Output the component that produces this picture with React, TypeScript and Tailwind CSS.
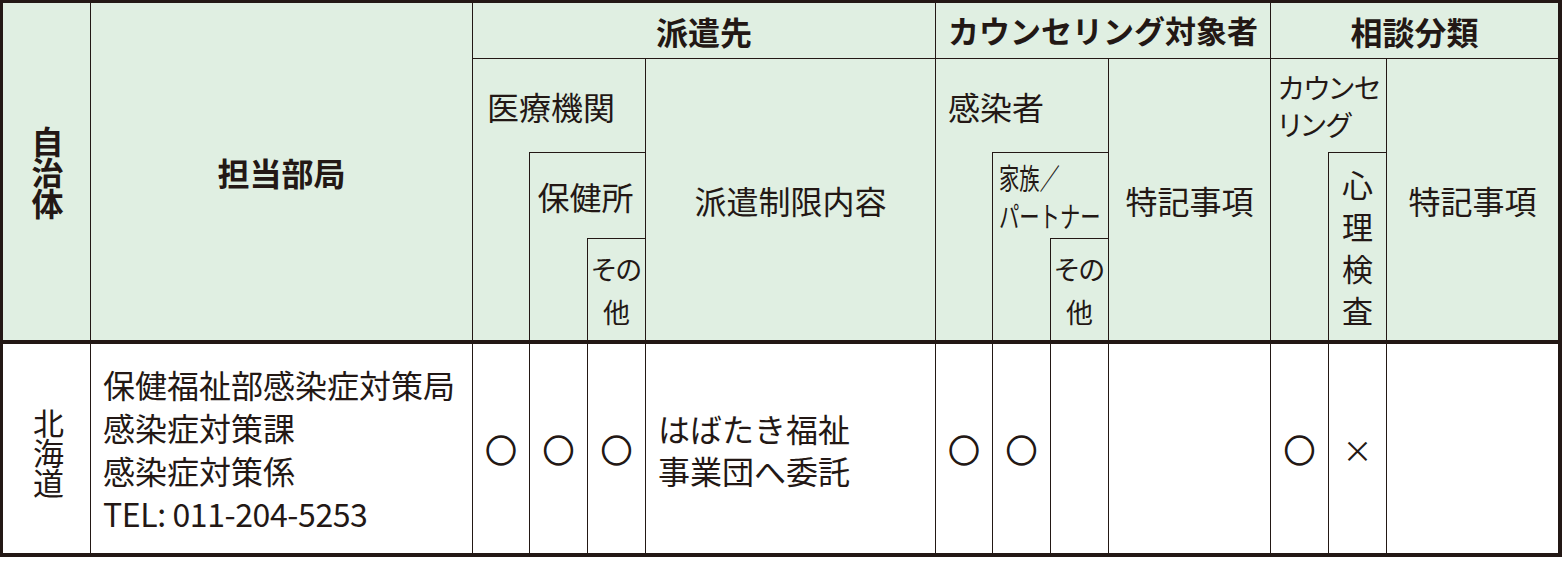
const cols =
  'grid-cols-[88px_382px_57px_58px_58px_290px_57px_58px_58px_162px_58px_58px_171px]';

const Mark = ({ mark, bold }: { mark?: string; bold?: boolean }) => (
  <div
    className={
      bold
        ? 'flex items-center justify-center border-r text-[31px] leading-none [-webkit-text-stroke:1.3px_#231815]'
        : 'flex items-center justify-center border-r text-[30px] leading-none'
    }
  >
    {mark}
  </div>
);

const App = () => {
  return (
    <div className="bg-white h-[561px] w-[1563px] text-[#231815] font-['Noto_Sans_CJK_JP','Noto_Sans',sans-serif]">
      <div className="w-[1562px] border-l-[3px] border-t-[3px] border-r-[4px] border-b-[4px]">
        {/* 見出し */}
        <div
          className={`grid ${cols} grid-rows-[56px_93px_86px_102px] border-b-[4px] bg-[#e0efe2]`}
        >
          <div className="col-start-1 row-start-1 row-span-4 flex items-center justify-center border-r pl-[2px]">
            <div className="w-[1em] text-center text-[32px] font-bold leading-[31px]">自治体</div>
          </div>
          <div className="col-start-2 row-start-1 row-span-4 flex items-center justify-center border-r text-[32px] font-bold">
            担当部局
          </div>

          <div className="col-start-3 col-span-4 row-start-1 flex items-center justify-center border-r border-b text-[32px] font-bold">
            派遣先
          </div>
          <div className="col-start-7 col-span-4 row-start-1 flex items-center justify-center border-r border-b text-[31px] font-bold">
            カウンセリング対象者
          </div>
          <div className="col-start-11 col-span-3 row-start-1 flex items-center justify-center border-b text-[32px] font-bold">
            相談分類
          </div>

          {/* 派遣先 */}
          <div className="col-start-3 col-span-3 row-start-2 flex items-center border-r pl-[14px] text-[32px]">
            医療機関
          </div>
          <div className="col-start-6 row-start-2 row-span-3 flex items-center justify-center border-r text-[32px]">
            派遣制限内容
          </div>
          <div className="col-start-3 row-start-3 row-span-2 border-r" />
          <div className="col-start-4 col-span-2 row-start-3 flex items-center justify-center border-t border-r pr-[4px] text-[32px]">
            保健所
          </div>
          <div className="col-start-4 row-start-4 border-r" />
          <div className="col-start-5 row-start-4 flex items-center justify-center border-t border-r text-center text-[27px] leading-[43px] [font-feature-settings:'palt']">
            <div>
              その
              <br />他
            </div>
          </div>

          {/* カウンセリング対象者 */}
          <div className="col-start-7 col-span-3 row-start-2 flex items-center border-r pl-[12px] text-[32px]">
            感染者
          </div>
          <div className="col-start-7 row-start-3 row-span-2 border-r" />
          <div className="col-start-8 col-span-2 row-start-3 flex items-center border-t border-r pl-[6px] text-[29px] leading-[38px]">
            <div className="origin-left scale-x-[0.7] whitespace-nowrap">
              家族／
              <br />
              パートナー
            </div>
          </div>
          <div className="col-start-8 row-start-4 border-r" />
          <div className="col-start-9 row-start-4 flex items-center justify-center border-t border-r text-center text-[27px] leading-[43px] [font-feature-settings:'palt']">
            <div>
              その
              <br />他
            </div>
          </div>
          <div className="col-start-10 row-start-2 row-span-3 flex items-center justify-center border-r text-[32px]">
            特記事項
          </div>

          {/* 相談分類 */}
          <div className="col-start-11 col-span-2 row-start-2 flex items-center border-r pl-[7px] text-[28px] leading-[37px] [font-feature-settings:'palt']">
            <div className="whitespace-nowrap">
              カウンセ
              <br />
              リング
            </div>
          </div>
          <div className="col-start-11 row-start-3 row-span-2 border-r" />
          <div className="col-start-12 row-start-3 row-span-2 flex items-center justify-center border-t border-r">
            <div className="w-[1em] text-center text-[31px] leading-[42px]">心理検査</div>
          </div>
          <div className="col-start-13 row-start-2 row-span-3 flex items-center justify-center text-[32px]">
            特記事項
          </div>
        </div>

        {/* 北海道の行 */}
        <div className={`grid ${cols} h-[209px] bg-white`}>
          <div className="flex items-center justify-center border-r pl-[4px] pt-[6px]">
            <div className="w-[1em] text-center text-[31px] leading-[30px]">北海道</div>
          </div>
          <div className="flex items-center border-r pl-[12px] text-[32px] leading-[43px]">
            <div>
              保健福祉部感染症対策局
              <br />
              感染症対策課
              <br />
              感染症対策係
              <br />
              <span className="tracking-[-0.4px]">TEL: 011-204-5253</span>
            </div>
          </div>
          <Mark mark="○" bold />
          <Mark mark="○" bold />
          <Mark mark="○" bold />
          <div className="flex items-center border-r pl-[12px] text-[32px] leading-[42px]">
            <div>
              はばたき福祉
              <br />
              事業団へ委託
            </div>
          </div>
          <Mark mark="○" bold />
          <Mark mark="○" bold />
          <Mark />
          <Mark />
          <Mark mark="○" bold />
          <Mark mark="×" />
          <div />
        </div>
      </div>
    </div>
  );
};

export default App;
